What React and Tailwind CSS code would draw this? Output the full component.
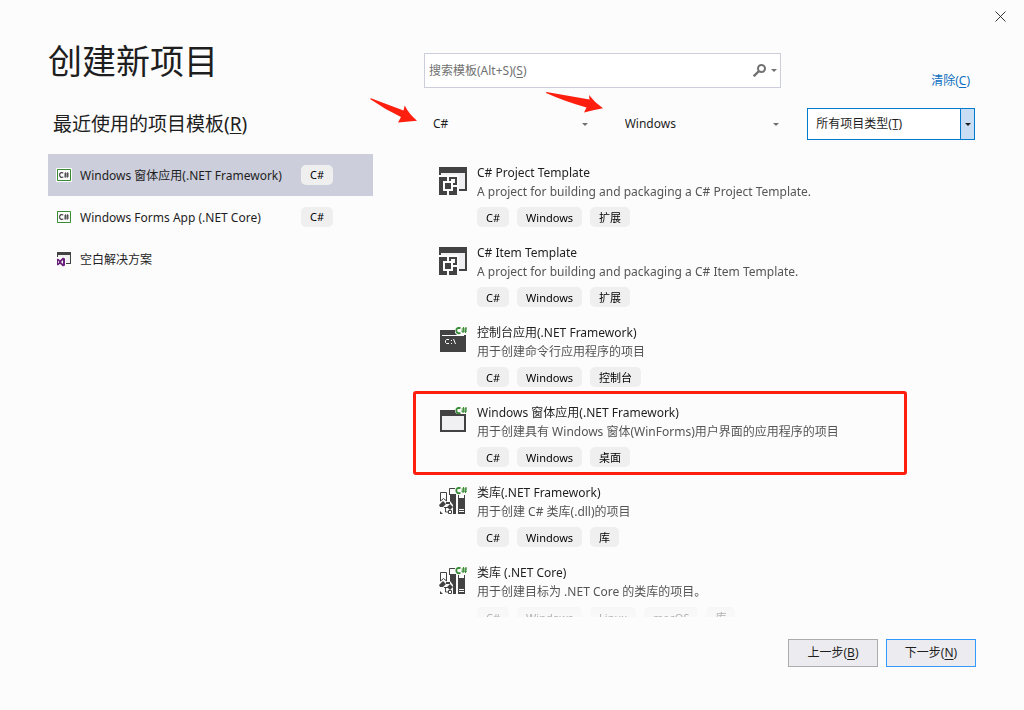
import React from "react";

const templates = [
  { icon: "template", title: "C# Project Template", text: "A project for building and packaging a C# Project Template.", tags: ["C#", "Windows", "扩展"] },
  { icon: "template", title: "C# Item Template", text: "A project for building and packaging a C# Item Template.", tags: ["C#", "Windows", "扩展"] },
  { icon: "console", title: "控制台应用(.NET Framework)", text: "用于创建命令行应用程序的项目", tags: ["C#", "Windows", "控制台"] },
  { icon: "form", title: "Windows 窗体应用(.NET Framework)", text: "用于创建具有 Windows 窗体(WinForms)用户界面的应用程序的项目", tags: ["C#", "Windows", "桌面"] },
  { icon: "library", title: "类库(.NET Framework)", text: "用于创建 C# 类库(.dll)的项目", tags: ["C#", "Windows", "库"] },
  { icon: "library", title: "类库 (.NET Core)", text: "用于创建目标为 .NET Core 的类库的项目。", tags: ["C#", "Windows", "Linux", "macOS", "库"] },
];

const recent = [
  { icon: "csharp", name: "Windows 窗体应用(.NET Framework)", tag: "C#", active: true },
  { icon: "csharp", name: "Windows Forms App (.NET Core)", tag: "C#" },
  { icon: "solution", name: "空白解决方案" },
];

function Sharp({ x, y }) {
  return (
    <g transform={`translate(${x} ${y})`} fill="none" stroke="#388a34">
      <path d="M5.500 1.200C2.800.4 1.300 1.500 1.300 3.600s1.600 3.200 4.200 2.300" strokeWidth="1.900" />
      <path d="M8.600 0L8 6M11 0l-.6 6M6.600 2h5.400M6.400 4.100h5.400" strokeWidth="1.100" />
    </g>
  );
}

function TemplateIcon() {
  return (
    <svg width="28" height="28" viewBox="0 0 28 28" shapeRendering="crispEdges" aria-hidden="true">
      <path fill="#f0eff1" d="M2 6h24v16H2z" />
      <path fill="#fcfcfc" d="M0 8h20v20H0z" />
      <path fill="#424242" d="M0 0h28v24h-8v-2h6V6H2v2H0z" />
      <path fill="#424242" d="M0 10h18v18H0z" />
      <path fill="#fcfcfc" d="M4 14h10v10H4zM8 10h2v4H8zM8 24h2v4H8zM14 18h4v2h-4z" />
      <path fill="#fcfcfc" d="M12 12h4v4h-4z" />
      <path fill="#424242" d="M6 16h6v6H6z" />
    </svg>
  );
}

function ConsoleIcon() {
  return (
    <svg width="28" height="28" viewBox="0 0 28 28" aria-hidden="true">
      <path fill="#424242" d="M1 3h26v22H1z" />
      <path fill="#fcfcfc" d="M16 0h12v8H18l-2-2zM3 8h22v1H3z" />
      <Sharp x={16} y={0} />
      <path fill="none" stroke="#fcfcfc" d="M10 12.500H7.500L6.500 13.500v2l1 1H10M12.500 13v1M12.500 16v1M14.500 12l2 5" />
    </svg>
  );
}

function FormIcon() {
  return (
    <svg width="28" height="28" viewBox="0 0 28 28" aria-hidden="true">
      <path fill="#424242" d="M1 3h26v22H1z" />
      <path fill="#f0eff1" d="M3 9h22v14H3z" />
      <path fill="#fcfcfc" d="M16 0h12v7H18l-2-2z" />
      <Sharp x={16} y={0} />
    </svg>
  );
}

function LibraryIcon() {
  return (
    <svg width="28" height="28" viewBox="0 0 28 28" aria-hidden="true">
      <path fill="none" stroke="#424242" d="M1.500 14V5.500h6V14L4.500 11.500zM10.500 8V1.500H16" />
      <path fill="#424242" d="M11 7h6v20h-3v-9l-3-4zM19 8h7v19h-7z" />
      <path fill="#fcfcfc" d="M20 8h5v3h-5zM20 22h5v1h-5zM20 24h5v1h-5z" />
      <path fill="#424242" d="M4 14l3 3-3 3H1l-1-2zM7 15h4v2H7zM1 24l3 3H1zM11 17l3 3-3 3-3-3z" />
      <path fill="none" stroke="#424242" d="M5 20.500h4M6.500 20v5H9M9.500 23.500h3v3h-3z" />
      <Sharp x={16} y={0} />
    </svg>
  );
}

function CSharpIcon() {
  return (
    <svg width="16" height="16" viewBox="0 0 16 16" aria-hidden="true">
      <path fill="#fff" d="M0 1h16v14H0z" />
      <path fill="#fcfcfc" stroke="#388a34" d="M1.500 2.500h13v11h-13z" />
      <path fill="none" stroke="#424242" strokeWidth="1.200" d="M7.300 6C5.300 5 3.600 6 3.600 8s1.700 3 3.700 2" />
      <path fill="none" stroke="#424242" strokeWidth=".9" d="M9.700 5.200L9.200 10.800M11.700 5.200l-.5 5.600M8 7h5M8 9h5" />
    </svg>
  );
}

function SolutionIcon() {
  return (
    <svg width="16" height="16" viewBox="0 0 16 16" aria-hidden="true">
      <path fill="#f0eff1" d="M2 4h12v9H2z" />
      <path fill="#424242" d="M1 1h14v12h-5v-1h4V4H2v3H1z" />
      <path fill="#fcfcfc" d="M0 6h10v10H0z" />
      <path fill="#68217a" fillRule="evenodd" d="M1 8l1-.5 2 1.800L7 6.500l2 1v7l-2 1-3-2.800-2 1.800-1-.5zM2 9.800v2.400L3.200 11zM7 9l-2 2 2 2z" />
    </svg>
  );
}

const icons = {
  template: TemplateIcon,
  console: ConsoleIcon,
  form: FormIcon,
  library: LibraryIcon,
  csharp: CSharpIcon,
  solution: SolutionIcon,
};

function Caret({ className }) {
  return (
    <svg className={className} width="6" height="3" viewBox="0 0 6 3" aria-hidden="true">
      <path fill="currentColor" d="M0 0h6L3 3z" />
    </svg>
  );
}

function Tag({ children }) {
  return <span className="flex h-5 items-center rounded-[5px] bg-[#efeff0] px-[9px] text-[11px] text-black">{children}</span>;
}

function Filter({ label, value }) {
  return (
    <div className="relative flex h-8 items-center">
      <select aria-label={label} className="size-full appearance-none bg-transparent pl-[9px] pr-5 text-[#1e1e1e] outline-none">
        <option>{value}</option>
      </select>
      <Caret className="pointer-events-none absolute right-1 text-[#717171]" />
    </div>
  );
}

function Arrow({ className, width, height, d }) {
  return (
    <svg className={className} width={width} height={height} viewBox={`0 0 ${width} ${height}`} aria-hidden="true">
      <path fill="#ff1f0f" d={d} />
    </svg>
  );
}

export default function App() {
  return (
    <div className="relative flex h-screen flex-col bg-[#fcfcfc] px-12 pb-[43px] font-['Noto_Sans','Noto_Sans_CJK_SC',sans-serif] text-[12px] text-[#1e1e1e]">
      <button aria-label="关闭" className="absolute right-[18px] top-[11px]">
        <svg width="11" height="11" viewBox="0 0 11 11" aria-hidden="true">
          <path d="M.5.5l10 10M10.500.5l-10 10" stroke="#1e1e1e" strokeWidth=".9" />
        </svg>
      </button>

      <main className="flex min-h-0 flex-1 gap-[51px]">
        <section className="w-[325px] shrink-0 pt-9">
          <h1 className="text-[34px] leading-[50px]">创建新项目</h1>
          <h2 className="mt-[23px] pl-[5px] text-[19px] leading-[30px]">
            最近使用的项目模板(<u className="underline-offset-2">R</u>)
          </h2>
          <ul className="mt-[15px]">
            {recent.map((item) => {
              const Icon = icons[item.icon];
              return (
                <li key={item.name} className={item.active ? "bg-[#cccedb]" : ""}>
                  <button className="flex h-[42px] w-full items-center pl-2 text-left">
                    <Icon />
                    <span className="ml-2 w-[221px] whitespace-nowrap pt-px">{item.name}</span>
                    {item.tag && <Tag>{item.tag}</Tag>}
                  </button>
                </li>
              );
            })}
          </ul>
        </section>

        <section className="flex min-w-0 flex-1 flex-col pt-[53px]">
          <div className="flex justify-between pr-[6px]">
            <div className="relative flex h-[35px] w-[357px] items-center border border-[#cccedb] bg-white">
              <input id="search" type="text" placeholder=" " className="peer size-full bg-transparent px-1 outline-none" />
              <label htmlFor="search" className="pointer-events-none absolute left-1 hidden text-[#717171] peer-placeholder-shown:block">
                搜索模板(Alt+S)(<u className="underline-offset-2">S</u>)
              </label>
              <button aria-label="搜索" className="absolute right-[3px] flex items-center gap-[5px] text-[#717171]">
                <svg width="13" height="13" viewBox="0 0 13 13" fill="none" stroke="currentColor" aria-hidden="true">
                  <circle cx="8.500" cy="4.500" r="3.500" strokeWidth="2" />
                  <path d="M6 7l-5.300 5.300" strokeWidth="2.400" />
                </svg>
                <Caret />
              </button>
            </div>
            <a href="#clear" className="mt-[19px] self-start leading-[18px] text-[#0e70c0]">
              清除(<u className="underline-offset-2">C</u>)
            </a>
          </div>

          <div className="mt-[18px] grid grid-cols-3 gap-6 pr-px">
            <Filter label="语言" value="C#" />
            <Filter label="平台" value="Windows" />
            <div className="relative flex h-8 border border-[#007acc] bg-white">
              <select aria-label="项目类型" className="size-full appearance-none bg-transparent pl-2 pr-4 text-[#1e1e1e] outline-none">
                <option>所有项目类型(T̲)</option>
              </select>
              <span className="pointer-events-none absolute inset-y-0 right-0 flex w-[14px] items-center justify-center border-l border-[#007acc] bg-[#c9def5]">
                <Caret />
              </span>
            </div>
          </div>

          <ul className="mt-[21px] min-h-0 flex-1 overflow-hidden [mask-image:linear-gradient(to_top,rgb(0_0_0/0.3),rgb(0_0_0/0.35)_8px,black_18px)]">
            {templates.map((item) => {
              const Icon = icons[item.icon];
              return (
                <li key={item.title} className="flex h-20 gap-[10px] pl-[15px] pt-[2px]">
                  <div className="shrink-0 pt-1">
                    <Icon />
                  </div>
                  <div className="leading-[19px]">
                    <h3>{item.title}</h3>
                    <p className="text-[#555555]">{item.text}</p>
                    <div className="mt-[6px] flex gap-2">
                      {item.tags.map((tag) => (
                        <Tag key={tag}>{tag}</Tag>
                      ))}
                    </div>
                  </div>
                </li>
              );
            })}
          </ul>
        </section>
      </main>

      <footer className="mt-[22px] flex justify-end gap-2">
        <button className="h-7 w-[90px] border border-[#acacac] bg-[#ececf0]">
          上一步(<u className="underline-offset-2">B</u>)
        </button>
        <button className="h-7 w-[90px] border border-[#3399ff] bg-[#ececf0]">
          下一步(<u className="underline-offset-2">N</u>)
        </button>
      </footer>

      <div className="pointer-events-none absolute left-[413px] top-[391px] h-[84px] w-[494px] rounded-[3px] border-3 border-[#ff1f0f]" />
      <Arrow className="pointer-events-none absolute left-[369px] top-[98px]" width={48} height={25} d="M1 1L2 .3L34.500 12.500L35.700 7.500Q40 16 48 22.700L29 24.500L32 19Q16 11.500 1 1z" />
      <Arrow className="pointer-events-none absolute left-[545px] top-[91px]" width={58} height={22} d="M1 2L1.500 1L44.500 8.500L44 4Q50 12 58 17.300Q48 19 39 21.500L41.500 16.500Q20 10.500 1 2z" />
    </div>
  );
}
